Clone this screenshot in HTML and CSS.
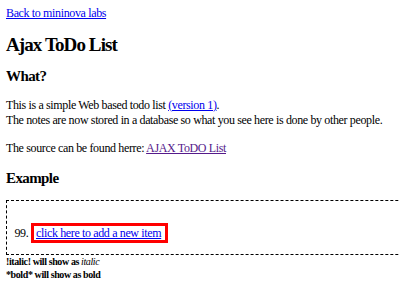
FILE: index.html
```html
<!DOCTYPE html>
<html>
<head>
<meta charset="utf-8">
<title>Ajax ToDo List</title>
<link rel="stylesheet" href="styles.css">
</head>
<body>
<a class="back" href="#">Back to mininova labs</a>
<h1>Ajax ToDo List</h1>
<h3 class="what">What?</h3>
<p>This is a simple Web based todo list <a href="#">(version 1)</a>.<br>
The notes are now stored in a database so what you see here is done by other people.</p>
<p>The source can be found herre: <a class="visited" href="#">AJAX ToDO List</a></p>
<h3 class="example">Example</h3>
<div class="todo">
  <ol start="99" class="list">
    <li><span class="add"><a href="#">click here to add a new item</a></span></li>
  </ol>
</div>
<div class="help">!italic! will show as <i>italic</i><br>*bold* will show as <b>bold</b></div>
</body>
</html>
```
FILE: styles.css
```css
html, body {
  margin: 0;
  padding: 0;
  background: #fff;
  overflow: hidden;
}
body {
  padding: 6px;
  font-family: "Liberation Serif", "Times New Roman", serif;
  font-size: 12px;
  line-height: 15px;
  letter-spacing: -0.36px;
  color: #000;
  width: 600px;
}
a { color: #0000ee; }
a.visited { color: #551a8b; }
.back { display: inline-block; vertical-align: top; }
h1 {
  font-size: 19px;
  line-height: 22px;
  letter-spacing: -0.9px;
  margin: 13px 0 11px;
}
h3 {
  font-size: 15px;
  line-height: 18px;
  letter-spacing: -0.6px;
  margin: 11px 0 13px;
}
p { margin: 13px 0; }
.todo {
  border: 1px dashed #000;
  width: 560px;
  padding: 25px 0 13px;
}
.list {
  margin: 0;
  padding-left: 24px;
}
.add {
  border: 3px solid #f00;
  padding: 0 4px 0 2px;
}
.help {
  font-size: 10px;
  line-height: 12.5px;
  letter-spacing: -0.4px;
  font-weight: bold;
  margin-top: 1px;
}
.help i { font-weight: normal; }
```
